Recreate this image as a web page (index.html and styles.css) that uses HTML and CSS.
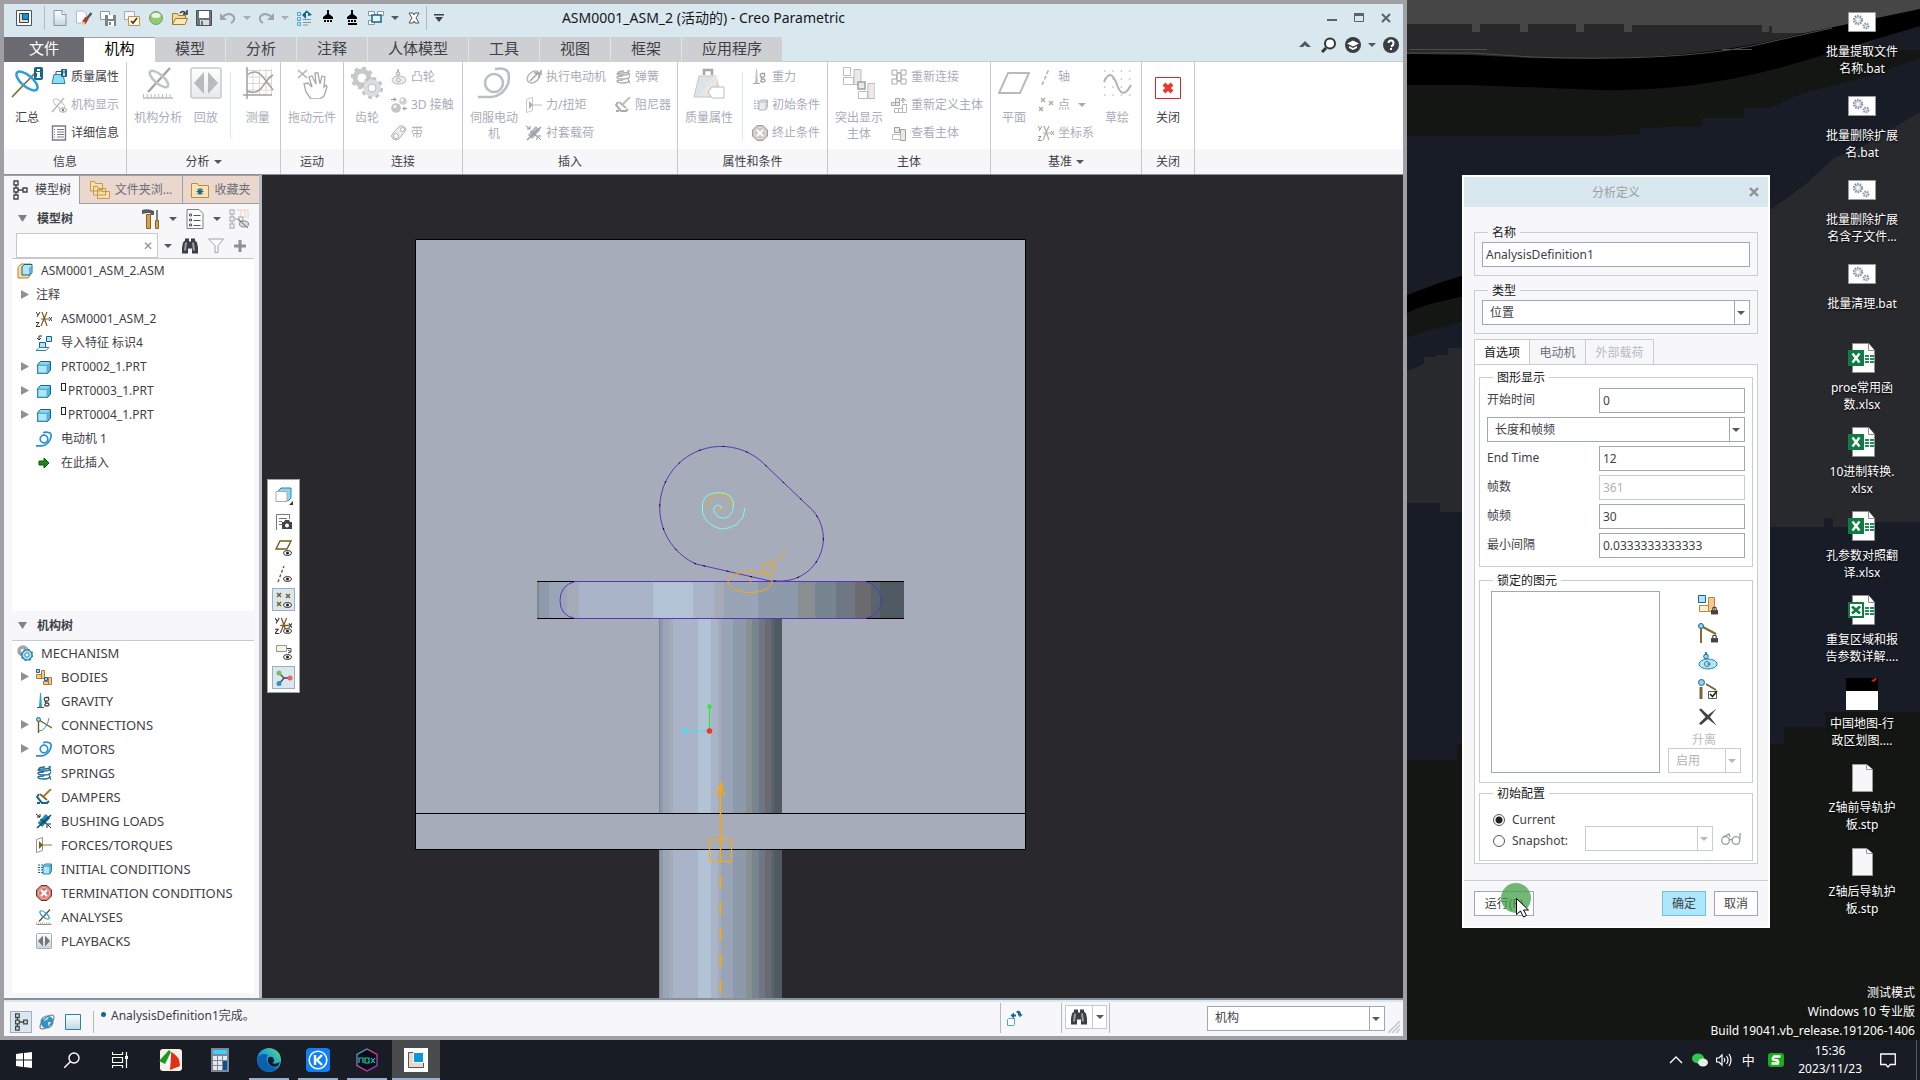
FILE: index.html
```html
<!DOCTYPE html>
<html lang="zh-CN">
<head>
<meta charset="utf-8">
<title>ASM0001_ASM_2 (活动的) - Creo Parametric</title>
<link rel="stylesheet" href="styles.css">
</head>
<body>
<svg class="defs" aria-hidden="true">
<defs>
<linearGradient id="gm" x2="0" y2="1"><stop stop-color="#fff"/><stop offset="1" stop-color="#c3d8e2"/></linearGradient>
<linearGradient id="ge" x1="0" y1="1" x2="1" y2="0"><stop stop-color="#0c59a4"/><stop offset=".5" stop-color="#1b9de2"/><stop offset="1" stop-color="#5fe06c"/></linearGradient>
<linearGradient id="gn" x2="1" y2="1"><stop stop-color="#18c6e8"/><stop offset=".5" stop-color="#ee3a8c"/><stop offset="1" stop-color="#7a3cf0"/></linearGradient>
</defs>
<symbol id="creo" viewBox="0 0 16 16"><path fill="#fff" stroke="#4b5560" d="M.5.500h15v15H.5z"/><path fill="#ead8cf" stroke="#444" d="M3.500 3.500h9v9h-9z"/><path fill="#0a96e0" stroke="#245" d="M6.500 3.500h6v6h-6z"/></symbol>
<symbol id="new" viewBox="0 0 16 16"><path fill="url(#gm)" stroke="#8f959c" d="M2 .5h8l4 4v11H2z"/><path fill="#fff" stroke="#8f959c" d="M10 .5v4h4"/></symbol>
<symbol id="eraser" viewBox="0 0 16 16"><path fill="#fff" stroke="#b5bac0" d="M.5 1h7l3 3v9h-10z"/><path stroke="#4c555e" stroke-width="2.500" d="m15.500 3-5 6"/><path stroke="#b33a2c" stroke-width="4" d="m11 8-3.500 5"/><path stroke="#e9c9a0" stroke-width="3" d="m8 12-1.500 2.500"/></symbol>
<symbol id="savecopy" viewBox="0 0 16 16"><path fill="#fff" stroke="#8f959c" d="M.5 1.500h9v8h-9z"/><path fill="#7d838c" d="M5 5h11v11H5z"/><path fill="#fff" d="M8 5h5v4H8zM8 11h6v5H8z"/><path fill="#7d838c" d="M9 12h2v3H9z"/></symbol>
<symbol id="check" viewBox="0 0 16 16"><path fill="#f7f7fa" stroke="#a5abb3" d="M.5 1.500h10v8H.5z"/><path fill="#fff7e8" stroke="#c9923f" d="M4.500 6.500h11v9h-11z"/><path fill="none" stroke="#333" stroke-width="1.600" d="m7 11 2 2 4-5"/></symbol>
<symbol id="ball" viewBox="0 0 16 16"><circle cx="8" cy="8" r="6.500" fill="#8fcc6c" stroke="#7f9a77"/><ellipse cx="8" cy="5.500" rx="4.500" ry="2.500" fill="#e9f8dd"/></symbol>
<symbol id="open" viewBox="0 0 16 16"><path fill="#f5d79a" stroke="#a97a2c" d="M.5 14.500v-11h5l1 2h7v3"/><path fill="#fbe9bd" stroke="#a97a2c" d="m.5 14.500 3-6h12l-2.500 6z"/><path fill="none" stroke="#333" stroke-width="1.500" d="M8 3q3-3 5.500 0M15 0v4h-4"/></symbol>
<symbol id="save" viewBox="0 0 16 16"><path fill="#6e747d" stroke="#4d5259" d="M.5.500h15v15H.5z"/><path fill="#fff" d="M3 1h10v7H3z"/><path fill="#d9dde2" d="M4 10h9v5H4z"/><path fill="#6e747d" d="M5 11h2v4H5z"/></symbol>
<symbol id="undo" viewBox="0 0 16 16"><path fill="none" stroke="#a0a3ab" stroke-width="2" d="M2 7q8-6 12 0 1 4-3 6"/><path fill="#a0a3ab" d="M0 3v7h7z"/></symbol>
<symbol id="redo" viewBox="0 0 16 16"><path fill="none" stroke="#a0a3ab" stroke-width="2" d="M14 7Q6 1 2 7q-1 4 3 6"/><path fill="#a0a3ab" d="M16 3v7H9z"/></symbol>
<symbol id="regen" viewBox="0 0 16 16"><path fill="none" stroke="#4aa8d8" d="M1.500 2.500h3v3h-3zM1.500 7.500h3v3h-3zM1.500 12.500h3v3h-3z"/><path stroke="#8f959c" d="M7 9.500h8M7 12.500h8M7 15h5"/><path fill="#16668a" d="M6 5l4-4v8zM15 4 10 0l0 3 2 0 0 3 4-1z"/></symbol>
<symbol id="brush" viewBox="0 0 16 16"><path fill="#000" d="M7 0h2v4l4 3v2H3V7l4-3z"/><path stroke="#000" stroke-width="2" stroke-dasharray="2 1" d="M4 11h9"/></symbol>
<symbol id="brush2" viewBox="0 0 16 16"><use href="#brush"/><path stroke="#000" stroke-width="2" d="M4 14h9"/></symbol>
<symbol id="wins" viewBox="0 0 16 16"><path fill="#fff" stroke="#8f959c" d="M.5 1.500h6v4h-6zM9.500 1.500h6v4h-6zM.5 10.500h6v4h-6z"/><path fill="#e6f6fd" stroke="#16668a" stroke-width="1.500" d="M4 5h9v7H4z"/></symbol>
<symbol id="xx" viewBox="0 0 16 16"><path fill="#fff" stroke="#555" d="M3 3h4l1 2 1-2h4l-3 5 3 5H9l-1-2-1 2H3l3-5z"/></symbol>
<symbol id="tri" viewBox="0 0 8 8"><path fill="currentColor" d="M0 2h8L4 6z"/></symbol>
<symbol id="tribar" viewBox="0 0 10 10"><path fill="currentColor" d="M0 1h10v1.500H0zM1 4h8L5 9z"/></symbol>
<symbol id="trir" viewBox="0 0 8 10"><path fill="#8e9097" d="M0 0v9l8-4.500z"/></symbol>
<symbol id="trid" viewBox="0 0 9 8"><path fill="#808289" d="M0 0h9L4.500 7z"/></symbol>

<symbol id="mech" viewBox="0 0 32 32"><path stroke="#8a6a2f" stroke-width="1.800" d="M1 30 26 4"/><ellipse cx="16" cy="14" rx="5.500" ry="13" transform="rotate(-50 16 14)" fill="none" stroke="#2f9fd8" stroke-width="2.500"/></symbol>
<symbol id="mechinfo" viewBox="0 0 32 32"><use href="#mech"/><rect x="23" width="9" height="13" rx="2" fill="#16668a"/><path fill="#fff" d="M26 2h3v2h-3zM25 5h4v5h1v1h-5v-1h1V6h-1z"/></symbol>
<symbol id="mass" viewBox="0 0 32 32"><path fill="none" stroke="#4c555e" stroke-width="2.500" d="M11 8V3h8v5"/><path fill="#8fd6f0" stroke="#5b97b2" d="m1 30 5-21h17l5 21z"/><path fill="#f0c8b4" d="m6 29 15-20h3l1 5-11 15z"/></symbol>
<symbol id="massb" viewBox="0 0 32 32"><use href="#mass"/><path fill="#fff" stroke="#777c85" d="m15 25 4-5h12v11H19z"/></symbol>
<symbol id="massi" viewBox="0 0 16 16"><path fill="none" stroke="#4c555e" d="M5 5V2.500h5"/><path fill="#8fdcf5" stroke="#2a83a8" d="m1 14.500 2-9h9l2 9z"/><rect x="10" width="6" height="8" rx="1" fill="#16668a"/><path stroke="#fff" stroke-width="1.500" d="M13 1v1.500M13 3.500V7"/></symbol>
<symbol id="mechdisp" viewBox="0 0 16 16"><path stroke="#777" stroke-width="1.500" d="M1 15 13 1"/><ellipse cx="8" cy="7" rx="3" ry="7" transform="rotate(-50 8 7)" fill="none" stroke="#777"/><ellipse cx="12" cy="13" rx="3.500" ry="2.200" fill="#fff" stroke="#444"/><circle cx="12" cy="13" r="1.200"/></symbol>
<symbol id="doc" viewBox="0 0 16 16"><path fill="#fff" stroke="#777c85" stroke-width="1.400" d="M1.500 1h13v14h-13z"/><path stroke="#777c85" d="M3 4.500h1M6 4.500h7M3 7h1M6 7h7M3 9.500h1M6 9.500h7M3 12h1M6 12h7"/></symbol>
<symbol id="mechan" viewBox="0 0 32 32"><path stroke="#6b4a1c" stroke-width="2.500" d="M6 25 28 1"/><ellipse cx="17" cy="12" rx="4.500" ry="11.500" transform="rotate(-50 17 12)" fill="none" stroke="#2f9fd8" stroke-width="2.500"/><path stroke="#777" stroke-width="1.500" d="M1 31h30"/><path stroke="#777" stroke-width="4" stroke-dasharray="1 2.800" d="M1 29h30"/></symbol>
<symbol id="play" viewBox="0 0 32 32"><rect x="1" y="1" width="30" height="30" rx="2" fill="url(#gm)" stroke="#8f959c" stroke-width="1.500"/><path fill="#777" d="M14 5v22L4 16zM18 5v22l10-11z"/></symbol>
<symbol id="measure" viewBox="0 0 32 32"><path fill="none" stroke="#dba992" d="M5 3.500h25M5 10h25M5 16.500h25M5 23h25M11 2v26M17.500 2v26M24 2v26M29.500 2v26"/><path fill="none" stroke="#444" stroke-width="1.500" d="M5 8q9-7 16 2t10 13M5 24q10 4 16-5T31 8M5 0v32M1 28h29"/></symbol>
<symbol id="hand" viewBox="0 0 32 32"><path stroke="#50687c" stroke-width="1.500" d="m2 3 9 8M11 3 2 11"/><path fill="#fff" stroke="#555" stroke-width="1.300" d="m8 17 4-1 4 4-3-10 3-1 4 8-1-11h3l2 11 2-8 3 1-1 10 2-2 1 2-3 9-4 3h-9l-5-7z"/></symbol>
<symbol id="gear" viewBox="0 0 32 32"><circle cx="11" cy="11" r="7" fill="none" stroke="#8f9298" stroke-width="5"/><circle cx="11" cy="11" r="10" fill="none" stroke="#8f9298" stroke-width="3" stroke-dasharray="4 3.800"/><circle cx="21" cy="21" r="6.500" fill="#fff" stroke="#9fc4d6" stroke-width="5"/><circle cx="21" cy="21" r="9.800" fill="none" stroke="#78889a" stroke-width="2.500" stroke-dasharray="4 3.700"/><circle cx="21" cy="21" r="4" fill="#fff" stroke="#66788a"/></symbol>
<symbol id="gears" viewBox="0 0 16 16"><circle cx="6" cy="6" r="4" fill="none" stroke="#a2a4a8" stroke-width="3.500"/><circle cx="10" cy="10" r="5" fill="#aee6fb" stroke="#2a83a8" stroke-width="1.200"/><circle cx="10" cy="10" r="5.600" fill="none" stroke="#2a83a8" stroke-width="1.500" stroke-dasharray="2 2.400"/><circle cx="10" cy="10" r="2.200" fill="#fff" stroke="#2a83a8"/></symbol>
<symbol id="cam" viewBox="0 0 16 16"><path fill="none" stroke="#16668a" stroke-width="1.500" d="M7 0v3"/><circle cx="7" cy="4.500" r="1.800" fill="#8fdcf5" stroke="#16668a"/><ellipse cx="8" cy="11" rx="7" ry="4" fill="#aee6fb" stroke="#2a83a8"/><circle cx="7.500" cy="11" r="1.800" fill="#fff" stroke="#16668a"/></symbol>
<symbol id="d3" viewBox="0 0 16 16"><circle cx="12" cy="4" r="3.800" fill="#8ea9b8"/><circle cx="5" cy="11" r="4.800" fill="#77919f"/><circle cx="4" cy="9.500" r="1.500" fill="#fff"/><circle cx="11" cy="3" r="1.200" fill="#fff"/><path stroke="#222" fill="none" d="M0 2.500h5M3 .5l2 2-2 2M16 11.500h-4M14 9.500l-2 2 2 2"/></symbol>
<symbol id="belt" viewBox="0 0 16 16"><path fill="#ddd" stroke="#666" d="m2 8 7-7q5-1 6 4L8 14q-3 2-6 0-3-3 0-6z"/><circle cx="5" cy="11" r="2.500" fill="#fff" stroke="#666"/><circle cx="11.500" cy="4.500" r="2" fill="#fff" stroke="#666"/></symbol>
<symbol id="motor" viewBox="0 0 32 32"><path fill="none" stroke="#2b93cf" stroke-width="2.600" d="M0 30h13q12-1 17-13 3-13-4-15-3-1-9 0"/><circle cx="16" cy="16" r="9" fill="none" stroke="#2b93cf" stroke-width="2.600"/></symbol>
<symbol id="motors" viewBox="0 0 16 16"><path fill="none" stroke="#2b8fd2" stroke-width="1.700" d="M0 14.800h6q5-.5 8-6 3-7-2-7.500-3-.5-5 .5"/><circle cx="8" cy="8" r="3.800" fill="none" stroke="#2b8fd2" stroke-width="1.700"/></symbol>
<symbol id="fmotor" viewBox="0 0 16 16"><ellipse cx="7.500" cy="8" rx="5" ry="7" transform="rotate(50 7.500 8)" fill="none" stroke="#777" stroke-width="1.500"/><path fill="none" stroke="#444" stroke-width="1.500" d="M4 12 12 4M8 4h5v5M15 1v5"/></symbol>
<symbol id="force" viewBox="0 0 16 16"><path fill="#fff" stroke="#8f959c" d="m.5 2.500 6-2v13l-6 2z"/><path stroke="#a07a36" d="M3 8h13"/><path fill="#7d5a1c" d="M3 4v8l4-4z"/></symbol>
<symbol id="bush" viewBox="0 0 16 16"><path stroke="#1f86b8" stroke-width="6" d="m4 12 8-9"/><path stroke="#16485f" stroke-width="1.500" d="m4.500 6 6 5M1 15 15 2"/><path fill="none" stroke="#222" d="m0 1 4 3M1 4h3V1M15 15l-3-3M11 15v-4h4"/></symbol>
<symbol id="spring" viewBox="0 0 16 16"><path fill="none" stroke="#1c6c95" stroke-width="1.500" d="M14 1q1 3-6 3-6 0-6 1t6 1 6-2M2 8q0 2 6 2t6-2M2 8q0-1 6-1M2 12q0 2 6 2t6-3M2 12q0-1 6-1M3 4q0-2 6-2"/><path stroke="#1c6c95" fill="none" d="m13 1 2 6-2 3 2 5"/></symbol>
<symbol id="damp" viewBox="0 0 16 16"><path stroke="#a87b30" stroke-width="2" d="M15 0 7 8"/><path stroke="#8a6a2f" stroke-width="2" d="m4 5 7 6"/><path fill="none" stroke="#16668a" stroke-width="2" d="M3 5 1 8l5 6 5 0 2-2M1 14h3"/></symbol>
<symbol id="grav" viewBox="0 0 16 16"><path fill="#2aa2c4" d="M4 0h1l1 14H3z"/><path stroke="#555" d="M1 14.500h7"/><path fill="none" stroke="#444" stroke-width="1.300" d="M13 4.500h-2.500a1.800 1.800 0 1 0 0 3.500 1.800 1.800 0 1 0 0-3.500M10 8q-2 2 1 2 2 0 2 1.500T10.500 13 9 11.500 10 10"/></symbol>
<symbol id="init" viewBox="0 0 16 16"><path stroke="#16668a" stroke-dasharray="2 1" d="M2 4h5M2 6.500h5M2 9h5M2 11.500h5"/><path fill="#aee6fb" stroke="#2a83a8" d="M7 5l2-2h6.500v7l-2 3H7zM7 5h7v8M14 5l1.500-2"/></symbol>
<symbol id="term" viewBox="0 0 16 16"><path fill="#d9786f" stroke="#6b3a34" d="M5 .5h6L15.500 5v6L11 15.500H5L.5 11V5z"/><circle cx="8" cy="8" r="5.500" fill="none" stroke="#eebcb4"/><path stroke="#fff" stroke-width="2.200" d="m5 5 6 6M11 5l-6 6"/></symbol>
<symbol id="bodyb" viewBox="0 0 32 32"><path fill="#fff" stroke="#777c85" d="M.5.500h7v8h-7zM.5 10.500h10v7H.5z"/><path fill="#eed0c0" stroke="#777c85" d="M11 2.500h7v15h-7zM25 16.500h7v15h-7z"/><path fill="#eed0c0" stroke="#444" stroke-width="1.500" d="M15 15h7v7h-7z"/><path fill="#fff" stroke="#777c85" d="M15.500 24.500h9v7h-9z"/></symbol>
<symbol id="reconn" viewBox="0 0 16 16"><path fill="none" stroke="#555" stroke-width="1.500" d="M5 4h6q-2 4 0 8H5q2-4 0-8"/><path fill="#fff" stroke="#555" d="M1 1h5v5H1zM10 1h5v5h-5zM1 10h5v5H1zM10 10h5v5h-5z"/></symbol>
<symbol id="redef" viewBox="0 0 16 16"><path fill="#eed0c0" stroke="#555" d="M4.500 1.500h4v4h-4zM.5 5.500h4v3h-4zM4.500 5.500h4v3h-4z"/><path fill="#fff" stroke="#777" d="M3.500 11.500h4v4h-4zM7.500 11.500h4v4h-4zM11.500 7.500h4v8h-4z"/><path fill="none" stroke="#333" d="M12 6V2M10 4l2-3 3 3"/></symbol>
<symbol id="viewb" viewBox="0 0 16 16"><path fill="#eed0c0" stroke="#444" d="M3.500 2.500h5v5h-5zM9.500 4.500h5v11h-5z"/><path fill="#fff" stroke="#777" d="M1.500 9.500h8v5h-8z"/></symbol>
<symbol id="plane" viewBox="0 0 32 32"><path fill="none" stroke="#777" stroke-width="2" d="M10 6h21l-9 20H1z"/></symbol>
<symbol id="axis" viewBox="0 0 16 16"><path stroke="#666" stroke-width="1.500" stroke-dasharray="4 2" d="M4 16 11 0"/></symbol>
<symbol id="pts" viewBox="0 0 16 16"><path fill="none" stroke="#7d5a1c" stroke-width="1.500" d="m3 1 4 4M7 1 3 5M11 4l4 4M15 4l-4 4M1 10l4 4M5 10l-4 4"/></symbol>
<symbol id="csys" viewBox="0 0 16 16"><path fill="none" stroke="#7d5a1c" stroke-width="1.200" d="M5 8h8M6 1l5 14M11 1 5 15"/><path fill="none" stroke="#333" d="m0 1 2 3M4 1 1 6M0 11.500h3l-3 4h4M13 6l3 4M16 6l-3 4"/></symbol>
<symbol id="sketch" viewBox="0 0 32 32"><path fill="none" stroke="#888" stroke-width="1.500" stroke-dasharray="1.500 6.800" d="M3 4h28M3 12h28M3 20h28M3 28h28"/><path fill="none" stroke="#666" stroke-width="2" d="M3 15q6-14 12 0 6 20 15 3"/></symbol>
<symbol id="closex" viewBox="0 0 32 32"><path fill="#fff" stroke="#d9262c" d="M3.500 10.500h25v21h-25z"/><path stroke="#e8382f" stroke-width="4" d="m12 17 8 8M20 17l-8 8"/></symbol>

<symbol id="treei" viewBox="0 0 16 20"><path fill="none" stroke="#444" stroke-width="1.400" d="M2 1h4v4H2zM2 8h4v4H2zM2 15h4v4H2zM11 8h4v4h-4zM4 5v3M4 12v3M6 10h5"/></symbol>
<symbol id="folders" viewBox="0 0 20 20"><path fill="#f6deac" stroke="#c79a4d" d="M.5 11V1.500h4l1 2h7V11zM3.500 15V6.500h4l1 2h7V15zM7.500 18.500v-9h4l1 2h7v7z"/></symbol>
<symbol id="fav" viewBox="0 0 18 16"><path fill="#f9e3b3" stroke="#b98d42" d="M.5 15.500V1.500h6l1 2h10v12z"/><path stroke="#16668a" stroke-width="1.200" d="M9 6v7M5.500 9.500h7M6.500 7l5 5M11.500 7l-5 5"/></symbol>
<symbol id="tools" viewBox="0 0 18 20"><path fill="#555c66" d="M0 1q6-2 12 1v4H9L8 4H5L0 5z"/><path fill="#d6a24c" stroke="#8a6420" d="M4.500 5.500h4v14h-4zM13.500 11.500h3v8h-3z"/><path stroke="#555c66" stroke-width="1.500" d="M15 1v10"/></symbol>
<symbol id="list" viewBox="0 0 17 20"><path fill="#fff" stroke="#777c85" d="M.5.500h12l4 4v15H.5z"/><path stroke="#555" d="M7 6.500h7M7 11.500h7M7 16.500h7"/><path fill="none" stroke="#555" d="M3 5h2v2H3zM3 10h2v2H3zM3 15h2v2H3z"/></symbol>
<symbol id="hid" viewBox="0 0 20 20"><path fill="none" stroke="#b6babf" stroke-width="1.300" d="M1 1h4v4H1zM1 8h4v4H1zM1 15h4v4H1zM10 8h4v4h-4zM3 5v3M3 12v3M5 10h5"/><path fill="none" stroke="#eed0c0" d="M8 1h11v9M12 1v6M16 1v8"/><ellipse cx="15" cy="15" rx="4.500" ry="3" fill="#ddd" stroke="#888"/><path stroke="#666" d="m9 10 10 9"/></symbol>
<symbol id="bino" viewBox="0 0 16 15"><path fill="#3b3f45" d="M3 0h4v3H3zM9 0h4v3H9zM1 4l2-2h4v1h2V2h4l2 2 1 5v6h-6v-5H6v5H0V9z"/><path fill="#9a9fa6" d="M3 4h2l-1 8H2zM10 4h2l1 8h-2z"/></symbol>
<symbol id="funnel" viewBox="0 0 16 15"><path fill="#fff" stroke="#9ca0a8" d="M.5.500h15L10 7v7H7V7z"/></symbol>
<symbol id="plus" viewBox="0 0 12 12"><path fill="#8e9097" d="M4.500 0h3v4.500H12v3H7.500V12h-3V7.500H0v-3h4.500z"/></symbol>
<symbol id="asm" viewBox="0 0 16 16"><path fill="#fbdc9b" stroke="#b3852f" d="M1 4.500 4 1h10v10l-3 4H1z"/><path fill="#aee6fb" stroke="#16668a" d="M5 4l2-2.500h8v8L13 12H5z"/><path fill="none" stroke="#2a83a8" d="M13 4v8"/></symbol>
<symbol id="part" viewBox="0 0 16 16"><path fill="#4fb6e0" stroke="#16668a" d="M1.500 6 4.500 2.500h10v8.500l-3 3.500h-10z"/><path fill="#aee6fb" stroke="#5aaed0" d="M2 6.500h9v7.500H2z"/><path fill="#8fd6f0" d="m2.500 5.500 2.500-2.500h9L11.500 5.500z"/></symbol>
<symbol id="import" viewBox="0 0 16 16"><path fill="#aee6fb" stroke="#16668a" d="M10.500 1.500h5v5h-5zM3.500 7.500h6v5h-6z"/><path fill="none" stroke="#333" d="M6 1H3v4M1 3l2 2 2-2"/><path fill="none" stroke="#2a83a8" d="m0 15.500 3-3h10l-3 3z"/></symbol>
<symbol id="go" viewBox="0 0 16 16"><path fill="#1a8a14" stroke="#0d5a0a" d="M3 6h5V3l5 5-5 5v-3H3z"/></symbol>
<symbol id="bodies" viewBox="0 0 16 16"><path fill="#f8c98b" stroke="#a9783a" d="M5.500 1.500h3v8h-3zM12.500 8.500h3v7h-3zM.5 5.500h5v4h-5zM7.500 12.500h5v3h-5z"/><path fill="#8fd6f0" stroke="#16668a" d="M.5.500h3v3h-3zM8.500 8.500h3v3h-3z"/></symbol>
<symbol id="conn" viewBox="0 0 16 16"><path stroke="#7d5a1c" stroke-width="1.400" d="M2.500 3v13M3 3l13 8"/><path fill="none" stroke="#2a9ad0" d="M3 14Q11 13 13 1"/><circle cx="2.500" cy="2.500" r="2" fill="#8fd6f0" stroke="#16668a"/></symbol>
<symbol id="eye" viewBox="0 0 9 6"><ellipse cx="4.500" cy="3" rx="4" ry="2.500" fill="#fff" stroke="#333"/><circle cx="4.500" cy="3" r="1.500" fill="#222"/></symbol>
<symbol id="v1" viewBox="0 0 18 18"><path fill="#8fd6f0" stroke="#2a83a8" d="m3 4 3-3h10v10l-3 3z"/><path fill="#fff" stroke="#a5abb3" d="M1 4.500h11v10H1z"/><path fill="#333" d="M18 14v4h-4z"/></symbol>
<symbol id="v2" viewBox="0 0 18 18"><path fill="none" stroke="#777" d="M1.500 17V1.500h13V6M4 5.500h8M4 8.500h3M4 11.500h3"/><path fill="#444" d="M7 9h2l1-2h4l1 2h2v7H7z"/><circle cx="12" cy="12.500" r="2" fill="#fff"/></symbol>
<symbol id="v3" viewBox="0 0 18 18"><path fill="#fff" stroke="#7d5a1c" stroke-width="1.400" d="M5 2h11l-4 8H1z"/><use href="#eye" x="8" y="11" width="9" height="6"/></symbol>
<symbol id="v4" viewBox="0 0 18 18"><path stroke="#7d5a1c" stroke-width="1.400" stroke-dasharray="3 2" d="M3 17 9 1"/><use href="#eye" x="8" y="11" width="9" height="6"/></symbol>
<symbol id="v5" viewBox="0 0 18 18"><path stroke="#7d5a1c" stroke-width="1.400" d="m2 2 4 4M6 2 2 6M11 3l4 4M15 3l-4 4M2 11l4 4M6 11l-4 4"/><use href="#eye" x="8" y="11" width="9" height="6"/></symbol>
<symbol id="v6" viewBox="0 0 18 18"><use href="#csys" width="17" height="17"/><use href="#eye" x="8" y="11" width="9" height="6"/></symbol>
<symbol id="v7" viewBox="0 0 18 18"><path fill="#fbf4dc" stroke="#8f959c" d="M1.500 2.500h10v6h-10z"/><path fill="none" stroke="#444" d="M12 5.500h4V9l-3 1M16 9l-3-2"/><use href="#eye" x="8" y="11" width="9" height="6"/></symbol>
<symbol id="v8" viewBox="0 0 18 18"><path stroke="#444" fill="none" stroke-width="1.300" d="m4 4 5 5-5 6M9 9h7"/><circle cx="4" cy="4" r="2.500" fill="#7aba68"/><circle cx="4" cy="14.500" r="2.500" fill="#3590c4"/><circle cx="15" cy="9" r="2.500" fill="#e06a60"/></symbol>
<symbol id="globe" viewBox="0 0 16 16"><circle cx="8" cy="8" r="6.500" fill="#2a95cf"/><path fill="#bfe6f7" d="M4 4q3-3 6-1L8 6 4 7zM9 8l4 0-2 5-2-1z"/><ellipse cx="8" cy="8" rx="9" ry="4" transform="rotate(-45 8 8)" fill="none" stroke="#777" stroke-width="1.100"/></symbol>
<symbol id="pane" viewBox="0 0 16 16"><path fill="url(#gm)" stroke="#2a83a8" d="M.5.500h15v15H.5z"/></symbol>
<symbol id="regen2" viewBox="0 0 16 16"><path fill="#fff" stroke="#4aa8d8" d="m.5 9.500 1-1h6v6l-1 1h-6z"/><path fill="#16668a" d="m3.500 5.500 3.500-3v2h2v2H7v2zM16 4.500 12.500 7.500v-2l-1.500 0V3.500L9 2l2-1.500q3 .5 3 4z"/></symbol>

<symbol id="lock" viewBox="0 0 8 9"><path fill="none" stroke="#444" stroke-width="1.300" d="M2 4V2q0-1 2-1t2 1v2"/><path fill="#444" d="M0 4h8v5H0z"/></symbol>
<symbol id="lbody" viewBox="0 0 20 20"><path fill="#f8c98b" stroke="#b98545" d="M10.500 2.500h6v14h-6z"/><path fill="#fdf3cf" stroke="#b98545" d="M1.500 10.500h9v6h-9z"/><path fill="#aee6fb" stroke="#16668a" d="M.5.500h7v7h-7z"/><use href="#lock" x="13" y="11" width="7" height="9"/></symbol>
<symbol id="lconn" viewBox="0 0 20 20"><path stroke="#8a6a2f" stroke-width="2" d="M3 3v17M3 3l15 8"/><circle cx="3" cy="3" r="2.500" fill="#8fd0f5" stroke="#16668a"/><use href="#lock" x="13" y="11" width="7" height="9"/></symbol>
<symbol id="lcam" viewBox="0 0 20 20"><path stroke="#16668a" stroke-width="1.500" d="M8 1v4"/><circle cx="8" cy="5.500" r="2.300" fill="#8fdcf5" stroke="#16668a"/><ellipse cx="10" cy="13" rx="9" ry="5" fill="#aee6fb" stroke="#2a83a8"/><circle cx="9" cy="13" r="2.400" fill="#fff" stroke="#16668a"/><path stroke="#16668a" d="M8.500 13h4"/></symbol>
<symbol id="econn" viewBox="0 0 20 20"><path stroke="#7d6430" stroke-width="3" d="M3 8v12"/><path stroke="#7d6430" stroke-width="2" d="m8 5 10 6"/><circle cx="3.500" cy="3.500" r="3" fill="#8fd0f5" stroke="#16668a"/><path fill="#fff" stroke="#555" d="M10.500 12.500h8v7h-8z"/><path fill="none" stroke="#222" stroke-width="1.600" d="m12 15 2.500 2.500L19 12"/></symbol>
<symbol id="del" viewBox="0 0 20 20"><path fill="#444" d="M1 2.500 3 1.500l7 6.500 8.500-6.500L12 10l7 9-9-7-7 6-2-1.500L7.500 10z"/></symbol>
<symbol id="specs" viewBox="0 0 20 12"><g fill="none" stroke="#999ca3" stroke-width="1.300"><circle cx="4.500" cy="7.500" r="3.800"/><circle cx="15" cy="7.500" r="3.800"/><path d="M8 6.500h3.500M2 4l6-3 1 3M19 6V0"/></g></symbol>

<symbol id="bat" viewBox="0 0 28 20"><path fill="#fff" stroke="#9a9a9a" d="M.5.500h27v19H.5z"/><circle cx="10" cy="8" r="4" fill="#d5dde5" stroke="#8a98a6" stroke-width="2.500" stroke-dasharray="1.500 1"/><circle cx="18" cy="14" r="2.500" fill="#d5dde5" stroke="#8a98a6" stroke-width="2" stroke-dasharray="1.500 1"/><circle cx="10" cy="8" r="1.500" fill="#fff"/></symbol>
<symbol id="sheet" viewBox="0 0 28 30"><path fill="#fff" stroke="#8f8f8f" d="M4.500.500h16l6 7v22h-22z"/><path fill="#fff" stroke="#8f8f8f" d="M20.500.500v7h6"/><path fill="#1e8e56" d="M17 12h4v2h-4zM22 12h4v2h-4zM17 15h4v2h-4zM22 15h4v2h-4zM17 18h4v2h-4zM22 18h4v2h-4z"/></symbol>
<symbol id="xls" viewBox="0 0 28 30"><use href="#sheet"/><path fill="#107c41" d="M0 7h16v16H0z"/><path stroke="#fff" stroke-width="2.400" d="m4.500 10.500 7 9M11.500 10.500l-7 9"/></symbol>
<symbol id="xls2" viewBox="0 0 28 30"><use href="#sheet"/><path fill="#fff" stroke="#107c41" stroke-width="2" d="M1 8h14v14H1z"/><path stroke="#107c41" stroke-width="2.800" d="m4 11.500 8 7M12 11.500l-8 7"/></symbol>
<symbol id="map" viewBox="0 0 32 32"><path fill="#fff" d="M0 0h32v32H0z"/><path d="M0 0h32v13H0z"/><path fill="none" stroke="#e8141c" stroke-width="2" d="M26 2q2 2 4-2"/></symbol>
<symbol id="file" viewBox="0 0 21 28"><path fill="#f7f7fa" stroke="#9a9a9a" d="M.5.500h14l6 5v22H.5z"/><path fill="#fff" stroke="#9a9a9a" d="M14.500.500v5h6"/></symbol>
</svg>

<div class="screen">
<main class="desktop">
<svg class="wallpaper" viewBox="1407 0 513 1040" preserveAspectRatio="xMaxYMin slice" aria-hidden="true">
<path fill="#171c26" d="M1407 0h513v1040h-513z"/>
<path fill="#141613" d="M1407 50h513v8L1870 76 1800 94 1770 108H1744V118H1702V126L1640 128V134L1600 136H1407z"/>
<path fill="#28282b" d="M1407 20h500l-40 25-160 18h-300z"/>
<path fill="#464647" d="M1407 0h513v9L1830 33H1772V26H1769V32H1762V25H1632V32H1624V24H1584V32H1576V24H1528V32H1520V24H1480V32H1472V24H1407z"/>
<path d="M1407 54 1470 55 1530 58Q1690 63 1800 34L1920 9V26L1800 62Q1700 92 1600 90L1470 85H1407z"/>
<path fill="none" stroke="#4c4c4e" d="M1407 53h65l60 4q140 5 220-11l80-18"/>
<path stroke="#4c4c4e" d="M1409 49.500h78M1722 49.500h30"/>
<path fill="#28292c" d="m1920 112-60 36-26 10-28 26-36 26v317h54v-9h9v9h41v-5h46z"/>
<path d="M1407 295q30-12 60-21v22q-40 7-60 17z"/>
<path fill="#141613" d="M1407 313q30-12 60-17v25q-40 9-60 17z"/>
<path fill="#28292c" d="M1407 371 1424 364V357H1437V355H1448V348H1470V512H1440V503H1407z"/>
<path fill="#141613" d="M1407 760h50V744h327v-17h41V712h95v328h-513z"/>
</svg>

<section class="creo">
<header class="titlebar">
<div class="quick">
<button class="logo" aria-label="Creo"><svg class="i16"><use href="#creo"/></svg></button><i class="bar"></i>
<button aria-label="新建"><svg class="i16"><use href="#new"/></svg></button>
<button aria-label="拭除"><svg class="i16"><use href="#eraser"/></svg></button>
<button aria-label="保存副本"><svg class="i16"><use href="#savecopy"/></svg></button>
<button aria-label="检入"><svg class="i16"><use href="#check"/></svg></button>
<button aria-label="外观"><svg class="i16"><use href="#ball"/></svg></button>
<button aria-label="打开"><svg class="i16"><use href="#open"/></svg></button>
<button aria-label="保存"><svg class="i16"><use href="#save"/></svg></button>
<button aria-label="撤消"><svg class="i16"><use href="#undo"/></svg></button>
<button class="dd off" aria-label="撤消列表"><svg class="i8"><use href="#tri"/></svg></button>
<button aria-label="重做"><svg class="i16"><use href="#redo"/></svg></button>
<button class="dd off" aria-label="重做列表"><svg class="i8"><use href="#tri"/></svg></button>
<button aria-label="重新生成"><svg class="i16"><use href="#regen"/></svg></button>
<button aria-label="清除"><svg class="i16"><use href="#brush"/></svg></button>
<button aria-label="清除全部"><svg class="i16"><use href="#brush2"/></svg></button>
<button aria-label="窗口"><svg class="i16"><use href="#wins"/></svg></button>
<button class="dd" aria-label="窗口列表"><svg class="i8"><use href="#tri"/></svg></button>
<button aria-label="关闭窗口"><svg class="i16"><use href="#xx"/></svg></button><i class="bar"></i>
<button class="more" aria-label="自定义"><svg class="i10"><use href="#tribar"/></svg></button>
</div>
<h1>ASM0001_ASM_2 (活动的) - Creo Parametric</h1>
<div class="winctl">
<button aria-label="最小化"><svg class="i12" viewBox="0 0 12 12"><path stroke="#5d626b" stroke-width="2" d="M1 8h10"/></svg></button>
<button aria-label="最大化"><svg class="i12" viewBox="0 0 12 12"><path fill="none" stroke="#5d626b" d="M1.500 1.500h9v8h-9z"/><path stroke="#5d626b" stroke-width="3" d="M1 2.500h10"/></svg></button>
<button aria-label="关闭"><svg class="i12" viewBox="0 0 12 12"><path stroke="#5d626b" stroke-width="2" d="m2 2 8 8M10 2l-8 8"/></svg></button>
</div>
</header>
<nav class="tabs">
<button class="file">文件</button><button class="on">机构</button><button>模型</button><button>分析</button><button>注释</button><button class="w4">人体模型</button><button>工具</button><button>视图</button><button>框架</button><button class="w4">应用程序</button>
<div class="help">
<button aria-label="折叠"><svg class="i12" viewBox="0 0 12 12"><path fill="#4b5560" d="m6 2 6 6H8L6 6 4 8H0z"/></svg></button>
<button aria-label="搜索"><svg class="i16" viewBox="0 0 16 16"><circle cx="9" cy="6.500" r="5" fill="#fff" stroke="#333" stroke-width="2"/><path stroke="#333" stroke-width="3" d="m5 11-4 4"/></svg></button>
<button aria-label="学习"><svg class="i16" viewBox="0 0 16 16"><circle cx="8" cy="8" r="8" fill="#3a3d42"/><path fill="#fff" d="m2 6.500 6-3 6 3-6 3zM4 9l4 2 4-2v2l-4 2-4-2z"/></svg></button>
<button class="dd" aria-label="学习列表"><svg class="i8"><use href="#tri"/></svg></button>
<button aria-label="帮助"><svg class="i16" viewBox="0 0 16 16"><circle cx="8" cy="8" r="8" fill="#3a3d42"/><path fill="none" stroke="#fff" stroke-width="2" d="M5.500 6q0-2.500 2.500-2.500T10.500 6 8 9.500M8 11v2"/></svg></button>
</div>
</nav>

<div class="ribbon">
<section class="grp g1"><div class="cmds">
<button class="big w46"><svg class="i32"><use href="#mechinfo"/></svg>汇总</button>
<div class="stack"><button><svg class="i16"><use href="#massi"/></svg>质量属性</button><button disabled><svg class="i16"><use href="#mechdisp"/></svg>机构显示</button><button><svg class="i16"><use href="#doc"/></svg>详细信息</button></div>
</div><h2>信息</h2></section>
<section class="grp g2"><div class="cmds">
<button class="big" disabled><svg class="i32"><use href="#mechan"/></svg>机构分析</button>
<button class="big w34" disabled><svg class="i32"><use href="#play"/></svg>回放</button><i class="vsep"></i>
<button class="big w46" disabled><svg class="i32"><use href="#measure"/></svg>测量</button>
</div><h2>分析<svg class="i8"><use href="#tri"/></svg></h2></section>
<section class="grp g3"><div class="cmds"><button class="big" disabled><svg class="i32"><use href="#hand"/></svg>拖动元件</button></div><h2>运动</h2></section>
<section class="grp g4"><div class="cmds">
<button class="big w46" disabled><svg class="i32"><use href="#gear"/></svg>齿轮</button>
<div class="stack"><button disabled><svg class="i16"><use href="#cam"/></svg>凸轮</button><button disabled><svg class="i16"><use href="#d3"/></svg>3D 接触</button><button disabled><svg class="i16"><use href="#belt"/></svg>带</button></div>
</div><h2>连接</h2></section>
<section class="grp g5"><div class="cmds">
<button class="big" disabled><svg class="i32"><use href="#motor"/></svg>伺服电动<br>机</button>
<div class="stack"><button disabled><svg class="i16"><use href="#fmotor"/></svg>执行电动机</button><button disabled><svg class="i16"><use href="#force"/></svg>力/扭矩</button><button disabled><svg class="i16"><use href="#bush"/></svg>衬套载荷</button></div>
<div class="stack"><button disabled><svg class="i16"><use href="#spring"/></svg>弹簧</button><button disabled><svg class="i16"><use href="#damp"/></svg>阻尼器</button></div>
</div><h2>插入</h2></section>
<section class="grp g6"><div class="cmds">
<button class="big" disabled><svg class="i32"><use href="#massb"/></svg>质量属性</button><i class="vsep"></i>
<div class="stack"><button disabled><svg class="i16"><use href="#grav"/></svg>重力</button><button disabled><svg class="i16"><use href="#init"/></svg>初始条件</button><button disabled><svg class="i16"><use href="#term"/></svg>终止条件</button></div>
</div><h2>属性和条件</h2></section>
<section class="grp g7"><div class="cmds">
<button class="big" disabled><svg class="i32"><use href="#bodyb"/></svg>突出显示<br>主体</button>
<div class="stack"><button disabled><svg class="i16"><use href="#reconn"/></svg>重新连接</button><button disabled><svg class="i16"><use href="#redef"/></svg>重新定义主体</button><button disabled><svg class="i16"><use href="#viewb"/></svg>查看主体</button></div>
</div><h2>主体</h2></section>
<section class="grp g8"><div class="cmds">
<button class="big w46" disabled><svg class="i32"><use href="#plane"/></svg>平面</button>
<div class="stack"><button disabled><svg class="i16"><use href="#axis"/></svg>轴</button><button disabled><svg class="i16"><use href="#pts"/></svg>点<svg class="i8"><use href="#tri"/></svg></button><button disabled><svg class="i16"><use href="#csys"/></svg>坐标系</button></div>
<button class="big w46" disabled><svg class="i32"><use href="#sketch"/></svg>草绘</button>
</div><h2>基准<svg class="i8"><use href="#tri"/></svg></h2></section>
<section class="grp g9"><div class="cmds"><button class="big"><svg class="i32"><use href="#closex"/></svg>关闭</button></div><h2>关闭</h2></section>
<section class="grp rest"><div class="cmds"></div><h2></h2></section>
</div>

<div class="work">
<aside class="side">
<div class="stabs"><button class="on"><svg class="tree-i"><use href="#treei"/></svg>模型树</button><button class="mid"><svg class="i20"><use href="#folders"/></svg>文件夹浏...</button><button><svg class="i18"><use href="#fav"/></svg>收藏夹</button></div>
<div class="thead"><svg class="i9"><use href="#trid"/></svg><b>模型树</b>
<span class="tt"><svg class="i20"><use href="#tools"/></svg><svg class="i8"><use href="#tri"/></svg><svg class="i20"><use href="#list"/></svg><svg class="i8"><use href="#tri"/></svg><svg class="i20"><use href="#hid"/></svg></span></div>
<div class="find"><div class="box"><input type="text" aria-label="搜索模型树"><span>✕</span></div><svg class="i8"><use href="#tri"/></svg><svg class="i16"><use href="#bino"/></svg><svg class="i16"><use href="#funnel"/></svg><svg class="i12"><use href="#plus"/></svg></div>
<ul class="tree">
<li class="root"><svg class="i16"><use href="#asm"/></svg>ASM0001_ASM_2.ASM</li>
<li class="note"><svg class="ar"><use href="#trir"/></svg>注释</li>
<li><svg class="i16"><use href="#csys"/></svg>ASM0001_ASM_2</li>
<li><svg class="i16"><use href="#import"/></svg>导入特征 标识4</li>
<li class="has"><svg class="ar"><use href="#trir"/></svg><svg class="i16"><use href="#part"/></svg>PRT0002_1.PRT</li>
<li class="has"><svg class="ar"><use href="#trir"/></svg><svg class="i16"><use href="#part"/></svg><i class="pk"></i>PRT0003_1.PRT</li>
<li class="has"><svg class="ar"><use href="#trir"/></svg><svg class="i16"><use href="#part"/></svg><i class="pk"></i>PRT0004_1.PRT</li>
<li><svg class="i16"><use href="#motors"/></svg>电动机 1</li>
<li><svg class="i16"><use href="#go"/></svg>在此插入</li>
</ul>
<div class="thead"><svg class="i9"><use href="#trid"/></svg><b>机构树</b></div>
<ul class="tree mtree">
<li class="root"><svg class="i16"><use href="#gears"/></svg>MECHANISM</li>
<li class="has"><svg class="ar"><use href="#trir"/></svg><svg class="i16"><use href="#bodies"/></svg>BODIES</li>
<li><svg class="i16"><use href="#grav"/></svg>GRAVITY</li>
<li class="has"><svg class="ar"><use href="#trir"/></svg><svg class="i16"><use href="#conn"/></svg>CONNECTIONS</li>
<li class="has"><svg class="ar"><use href="#trir"/></svg><svg class="i16"><use href="#motors"/></svg>MOTORS</li>
<li><svg class="i16"><use href="#spring"/></svg>SPRINGS</li>
<li><svg class="i16"><use href="#damp"/></svg>DAMPERS</li>
<li><svg class="i16"><use href="#bush"/></svg>BUSHING LOADS</li>
<li><svg class="i16"><use href="#force"/></svg>FORCES/TORQUES</li>
<li><svg class="i16"><use href="#init"/></svg>INITIAL CONDITIONS</li>
<li><svg class="i16"><use href="#term"/></svg>TERMINATION CONDITIONS</li>
<li><svg class="i16"><use href="#mechan"/></svg>ANALYSES</li>
<li><svg class="i16"><use href="#play"/></svg>PLAYBACKS</li>
</ul>
</aside>
<div class="view">
<svg class="scene" viewBox="262 175 1141 823" preserveAspectRatio="xMidYMid slice" role="img" aria-label="模型视图">
<defs><g id="shaft"><path fill="#7c8790" d="M659 0h1v200h-1z"/><path fill="#8d9aab" d="M660 0h3v200h-3z"/><path fill="#9aa6b8" d="M663 0h6v200h-6z"/><path fill="#a6abb8" d="M669 0h4v200h-4z"/><path fill="#a9b4c9" d="M673 0h25v200h-25z"/><path fill="#b2c3d5" d="M698 0h13v200h-13z"/><path fill="#a9b4c9" d="M711 0h7v200h-7z"/><path fill="#a6abb8" d="M718 0h3v200h-3z"/><path fill="#99a5b7" d="M721 0h12v200h-12z"/><path fill="#8d9aab" d="M733 0h13v200h-13z"/><path fill="#8a9092" d="M746 0h6v200h-6z"/><path fill="#778590" d="M752 0h7v200h-7z"/><path fill="#6f7684" d="M759 0h6v200h-6z"/><path fill="#6b6a70" d="M765 0h6v200h-6z"/><path fill="#59646e" d="M771 0h3v200h-3z"/><path fill="#505a63" d="M774 0h8v200h-8z"/></g>
<clipPath id="c1"><path d="M650 618h140v195H650z"/></clipPath><clipPath id="c2"><path d="M650 850h140v150H650z"/></clipPath></defs>
<path fill="#a6acb9" stroke="#000" d="M415.500 239.500h610v610h-610z"/>
<g clip-path="url(#c1)"><use href="#shaft" y="618"/></g><g clip-path="url(#c2)"><use href="#shaft" y="850"/></g>
<path stroke="#000" d="M415 813.500h611"/>
<g><path fill="#7c8790" d="M537 581h2v37h-2z"/><path fill="#8d9aab" d="M539 581h10v37h-10z"/><path fill="#9aa6b8" d="M549 581h18v37h-18z"/><path fill="#a6abb8" d="M567 581h12v37h-12z"/><path fill="#a9b4c9" d="M579 581h74v37h-74z"/><path fill="#b2c3d5" d="M653 581h40v37h-40z"/><path fill="#a9b4c9" d="M693 581h21v37h-21z"/><path fill="#a6abb8" d="M714 581h10v37h-10z"/><path fill="#99a5b7" d="M724 581h34v37h-34z"/><path fill="#8d9aab" d="M758 581h40v37h-40z"/><path fill="#8a9092" d="M798 581h17v37h-17z"/><path fill="#778590" d="M815 581h21v37h-21z"/><path fill="#6f7684" d="M836 581h19v37h-19z"/><path fill="#6b6a70" d="M855 581h16v37h-16z"/><path fill="#59646e" d="M871 581h9v37h-9z"/><path fill="#505a63" d="M880 581h24v37h-24z"/></g>
<path stroke="#000" d="M537 581.500h367M537 618.500h367"/>
<g fill="none" stroke="#5b35b8"><path d="M575 581.500h291M575 618.500h291M575 581.500q-15 4-15 19t15 18M865 581.500q16 4 16 19t-16 18"/><path d="M696 564A61.500 61.500 0 1 1 761 461L807 505A42.500 42.500 0 0 1 782 581L770 581Z"/></g>
<path fill="none" stroke="#000" stroke-dasharray="2 22" d="M696 564A61.500 61.500 0 1 1 761 461L807 505A42.500 42.500 0 0 1 782 581L770 581Z"/>
<g fill="none" stroke="#ffa800"><path d="M706 507Q710 494 720 494T733.500 507M717 511l4-4 4 4"/><ellipse cx="750" cy="582" rx="22" ry="10.500"/><circle cx="768.500" cy="568" r="6"/><path d="m768 569 18-18M750.500 578v5"/><path stroke-width="1.400" d="M720.500 784v78M717 796l3.500-13 3.500 13"/><path d="M709.500 839.500h22v22h-22z"/><path stroke-width="1.500" stroke-dasharray="13 13" d="M720.500 876v122"/></g>
<path fill="none" stroke="#7dffe0" d="m745 508-2 9-7 8-8 3-7 1-8-3-7-6-3.500-7V503l3-6 5-3 7-1.500 8 1 6 4 2 6-1 8-4 5-5 2-6-2-4-6 1-4 4-1.500 3 2v2"/>
<path stroke="#2fe02f" stroke-width="1.200" d="M709.500 731v-25"/><path stroke="#3fe4f5" stroke-width="1.200" d="M709 731h-25"/><circle cx="709.500" cy="706.500" r="2.200" fill="#2ef02e"/><circle cx="684.500" cy="731" r="2.200" fill="#3fe4f5"/><circle cx="709.500" cy="731" r="2.800" fill="#f5302e"/>
</svg>
<div class="vtool" role="toolbar"><button aria-label="视图"><svg class="i18"><use href="#v1"/></svg></button><button aria-label="快照"><svg class="i18"><use href="#v2"/></svg></button><button aria-label="平面显示"><svg class="i18"><use href="#v3"/></svg></button><button aria-label="轴显示"><svg class="i18"><use href="#v4"/></svg></button><button class="on" aria-label="点显示"><svg class="i18"><use href="#v5"/></svg></button><button aria-label="坐标系显示"><svg class="i18"><use href="#v6"/></svg></button><button aria-label="注释显示"><svg class="i18"><use href="#v7"/></svg></button><button class="on" aria-label="旋转中心"><svg class="i18"><use href="#v8"/></svg></button></div>
</div>
</div>

<footer class="status">
<button class="on" aria-label="导航器"><svg class="i18"><use href="#treei"/></svg></button><button aria-label="浏览器"><svg class="i16"><use href="#globe"/></svg></button><button aria-label="全屏"><svg class="i16"><use href="#pane"/></svg></button><i class="bar"></i>
<p>AnalysisDefinition1完成。</p>
<i class="bar"></i><svg class="i16 rg"><use href="#regen2"/></svg><i class="bar"></i>
<button class="bin" aria-label="查找"><svg class="i16"><use href="#bino"/></svg><span><svg class="i8"><use href="#tri"/></svg></span></button><i class="bar"></i>
<div class="sel"><select aria-label="过滤器"><option>机构</option></select></div>
<svg class="i12 grip" viewBox="0 0 12 12"><path stroke="#b9c6d0" stroke-width="1.500" d="M0 12 12 0M4 12l8-8M8 12l4-4"/></svg>
</footer>
</section>

<section class="dialog" role="dialog" aria-label="分析定义">
<header><h2>分析定义</h2><button aria-label="关闭对话框"><svg class="i12" viewBox="0 0 12 12"><path stroke="#8e9097" stroke-width="2.400" d="m2 2 8 8M10 2l-8 8"/></svg></button></header>
<form onsubmit="return false">
<fieldset><legend>名称</legend><input type="text" value="AnalysisDefinition1" aria-label="名称"></fieldset>
<fieldset><legend>类型</legend><div class="sel"><select aria-label="类型"><option>位置</option></select></div></fieldset>
<div class="dtabs"><button type="button" class="on">首选项</button><button type="button">电动机</button><button type="button" disabled>外部载荷</button></div>
<div class="panel">
<fieldset class="rows"><legend>图形显示</legend>
<label for="t0">开始时间</label><input id="t0" type="text" value="0">
<div class="sel wide"><select aria-label="时间方式"><option>长度和帧频</option></select></div>
<label for="t1">End Time</label><input id="t1" type="text" value="12">
<label for="t2">帧数</label><input id="t2" type="text" value="361" disabled>
<label for="t3">帧频</label><input id="t3" type="text" value="30">
<label for="t4">最小间隔</label><input id="t4" type="text" value="0.0333333333333">
</fieldset>
<fieldset class="lockset"><legend>锁定的图元</legend>
<div class="lockrow"><div class="listbox" role="listbox" aria-label="锁定的图元"></div>
<div class="lockcol"><button type="button" aria-label="锁定主体"><svg class="i20"><use href="#lbody"/></svg></button><button type="button" aria-label="锁定连接"><svg class="i20"><use href="#lconn"/></svg></button><button type="button" aria-label="凸轮升离"><svg class="i20"><use href="#lcam"/></svg></button><button type="button" aria-label="启用连接"><svg class="i20"><use href="#econn"/></svg></button><button type="button" aria-label="删除"><svg class="i20"><use href="#del"/></svg></button>
<label for="lift">升离</label><div class="sel"><select id="lift" disabled><option>启用</option></select></div></div></div>
</fieldset>
<fieldset class="initset"><legend>初始配置</legend>
<div class="initrow"><div class="radios"><label><input type="radio" name="cfg" checked>Current</label><label><input type="radio" name="cfg">Snapshot:</label></div>
<div class="sel"><select aria-label="快照" disabled><option></option></select></div><svg class="i20"><use href="#specs"/></svg></div>
</fieldset>
</div>
</form>
<footer><button class="run">运行(R)</button><button class="ok">确定</button><button>取消</button>
<svg class="pointer" viewBox="0 0 32 36" aria-hidden="true"><circle cx="15" cy="15" r="15" fill="#41a045" fill-opacity=".75"/><path fill="#fff" stroke="#000" d="M15.500 15.500v16l4-3.500 3 6 3-1.500-3-5.500h5z"/></svg></footer>
</section>

<ul class="icons">
<li><svg width="28" height="20"><use href="#bat"/></svg><span>批量提取文件<br>名称.bat</span></li>
<li><svg width="28" height="20"><use href="#bat"/></svg><span>批量删除扩展<br>名.bat</span></li>
<li><svg width="28" height="20"><use href="#bat"/></svg><span>批量删除扩展<br>名含子文件...</span></li>
<li><svg width="28" height="20"><use href="#bat"/></svg><span>批量清理.bat</span></li>
<li><svg width="28" height="30"><use href="#xls"/></svg><span>proe常用函<br>数.xlsx</span></li>
<li><svg width="28" height="30"><use href="#xls"/></svg><span>10进制转换.<br>xlsx</span></li>
<li><svg width="28" height="30"><use href="#xls"/></svg><span>孔参数对照翻<br>译.xlsx</span></li>
<li><svg width="28" height="30"><use href="#xls2"/></svg><span>重复区域和报<br>告参数详解....</span></li>
<li><svg width="32" height="32"><use href="#map"/></svg><span>中国地图-行<br>政区划图....</span></li>
<li><svg width="21" height="28"><use href="#file"/></svg><span>Z轴前导轨护<br>板.stp</span></li>
<li><svg width="21" height="28"><use href="#file"/></svg><span>Z轴后导轨护<br>板.stp</span></li>
</ul>
<p class="mark">测试模式<br>Windows 10 专业版<br>Build 19041.vb_release.191206-1406</p>
</main>

<nav class="taskbar">
<button class="sys" aria-label="开始"><svg class="i16" viewBox="0 0 16 16"><path fill="#fff" d="m0 2 7-1v6.500H0zM8 .900 16 0v7.500H8zM0 8.500h7V15l-7-1zM8 8.500h8V16l-8-1z"/></svg></button>
<button class="sys" aria-label="搜索"><svg class="i16" viewBox="0 0 16 16"><circle cx="10" cy="6" r="5" fill="none" stroke="#fff" stroke-width="1.400"/><path stroke="#fff" stroke-width="1.400" d="M6.500 9.500 0 16"/></svg></button>
<button class="sys tv" aria-label="任务视图"><svg class="i16" viewBox="0 0 16 16"><path fill="none" stroke="#fff" stroke-width="1.200" d="M.5 0v2.500h10V0M.5 5.500h10v5H.5zM.5 16v-2.500h10V16M14.500 0v16"/><path fill="#fff" d="M13 4h3v3h-3z"/></svg></button>
<button aria-label="录屏"><svg class="i24" viewBox="0 0 24 24"><rect x="1" y="1" width="22" height="22" rx="3" fill="#f5f1e8"/><path fill="#1a9a22" d="M10 2 0 13l6 3 6-12z"/><path fill="#e03018" d="m12 4-1 18 10-4q0-10-9-14z"/><path fill="#fff" d="m12 4-5 13 4 3z"/></svg></button>
<button aria-label="计算器"><svg class="i24" viewBox="0 0 24 24"><path fill="#7d8896" d="M3 0h18v24H3z"/><path fill="#3fd0fa" d="M5 2h14v4H5z"/><path fill="#e6e9ed" d="M5 8h4v4H5zM10 8h4v4h-4zM15 8h4v4h-4zM5 13h4v4H5zM10 13h4v4h-4zM5 18h4v4H5zM10 18h4v4h-4z"/><path fill="#0d4f9a" d="M15 13h4v9h-4z"/></svg></button>
<button class="run" aria-label="Edge"><svg class="i24" viewBox="0 0 24 24"><circle cx="12" cy="12" r="12" fill="url(#ge)"/><path fill="#0d5fb0" d="M1 9q5-5 10-2-3 4 0 9 4 5 10 3-5 6-13 4Q-1 19 1 9z"/><path fill="#171c24" d="M12 9q4-1 5 3 0 3-2 3 3 2 8-1l-2 4q-5 2-8-1-4-4-1-8z"/></svg></button>
<button class="run" aria-label="K"><svg class="i24" viewBox="0 0 24 24"><rect width="24" height="24" rx="4" fill="#1080f8"/><circle cx="12" cy="12" r="8.800" fill="none" stroke="#fff" stroke-width="1.600"/><path fill="none" stroke="#fff" stroke-width="2.400" d="M9 7v10M16 7l-5 5 5 5"/></svg></button>
<button class="run" aria-label="nox"><svg class="i24" viewBox="0 0 24 24"><path fill="#0b0d14" stroke="url(#gn)" stroke-width="1.300" d="M12 1 22 6.500v11L12 23 2 17.500v-11z"/><path fill="none" stroke="#22c7b8" stroke-width="1.200" d="M4 15v-5h4v5M10 10h4v5h-4zM16 10l4 5M20 10l-4 5"/></svg></button>
<button class="run on" aria-label="Creo"><svg class="i24" viewBox="0 0 24 24"><path fill="#fff" d="M0 0h24v24H0z"/><path fill="#ead8cf" stroke="#555" d="M4.500 4.500h15v15h-15z"/><path fill="#0a96e0" stroke="#fff" d="M9.500 4.500h10v10h-10z"/></svg></button>
<div class="tray">
<svg class="i16" viewBox="0 0 16 16"><path fill="none" stroke="#fff" stroke-width="1.400" d="m2 11 6-6 6 6"/></svg>
<svg class="i16" viewBox="0 0 16 16"><ellipse cx="6" cy="6.500" rx="6" ry="5" fill="#2dc84d"/><ellipse cx="11" cy="10.500" rx="5" ry="4" fill="#e8eee8"/></svg>
<svg class="i16" viewBox="0 0 16 16"><path fill="none" stroke="#fff" stroke-width="1.200" d="M.5 6v4h2.500l3 3V3L3 6zM8 6q1.500 2 0 4M10.500 4q3 4 0 8M13 2q4 6 0 12"/></svg>
<span class="ime">中</span>
<svg class="i16" viewBox="0 0 16 16"><rect y="1" width="16" height="14" rx="3" fill="#1cab1c"/><path fill="none" stroke="#fff" stroke-width="2.400" d="M12.500 4.500H6q-3 3.500 1 3.500t3 3.500H3.500"/></svg>
<time>15:36<br>2023/11/23</time>
<svg class="i16 note-i" viewBox="0 0 16 16"><path fill="none" stroke="#fff" stroke-width="1.300" d="M.7 2h14.600v10.500h-5L8 15l-2.300-2.500h-5z"/></svg>
<i class="peek"></i>
</div>
</nav>
</div>
</body>
</html>
```
FILE: styles.css
```css
* { box-sizing: border-box; }
body {
  margin: 0;
  font: 12px/16px "Noto Sans", "Noto Sans CJK SC", sans-serif;
  color: #3f4147;
}
h1, h2, p, ul { margin: 0; padding: 0; font-weight: 400; font-size: 12px; }
ul { list-style: none; }
button, input, select { font: inherit; color: inherit; }
button { padding: 0; border: 0; background: none; white-space: nowrap; }
svg { flex: none; display: block; }
.defs { position: absolute; width: 0; height: 0; }
.i8 { width: 8px; height: 8px; color: #55585f; }
.i9 { width: 9px; height: 8px; }
.i10 { width: 10px; height: 10px; color: #3f4147; }
.i12 { width: 12px; height: 12px; }
.i16 { width: 16px; height: 16px; }
.i18 { width: 18px; height: 18px; }
.i20 { width: 20px; height: 20px; }
.i24 { width: 24px; height: 24px; }
.i32 { width: 32px; height: 32px; }

.screen { display: flex; flex-direction: column; min-height: 100vh; background: #171c26; }
.desktop { position: relative; flex: 1; display: flex; }
.wallpaper { position: absolute; top: 0; right: 0; width: 513px; height: 100%; }

/* application window */
.creo { position: relative; flex: 1; min-width: 0; display: flex; flex-direction: column; border: 4px solid #a09fa3; background: #f7f7fa; }
.titlebar { display: grid; grid-template-columns: 1fr auto 1fr; align-items: center; height: 33px; padding-bottom: 6px; background: #d9e7ee; }
.titlebar h1 { font-size: 14px; line-height: 20px; color: #16171a; }
.quick { display: flex; align-items: center; height: 26px; }
.quick button, .winctl button, .help button { display: grid; place-items: center; width: 24px; height: 24px; }
.quick .logo { width: 40px; }
.quick .dd, .help .dd { width: 14px; }
.quick .off svg { color: #a9adb5; }
.bar { width: 1px; height: 24px; margin: 0 3px 0 0; background: #b5b8bf; }
.quick .more { width: 18px; }
.winctl { display: flex; justify-content: flex-end; padding-right: 4px; }
.winctl button { width: 27px; }

.tabs { display: flex; gap: 1px; height: 25px; background: #d9e7ee; border-bottom: 1px solid #c6cad0; }
.tabs > button { width: 70px; height: 25px; padding-bottom: 4px; font-size: 15px; line-height: 20px; color: #3f4147; background: #cdcfd3; }
.tabs > .w4 { width: 100px; }
.tabs > .file { width: 80px; margin-right: -1px; color: #fff; background: #6b6a70; }
.tabs > .on { width: 71px; margin-right: -1px; color: #000; background: #fff; border-top: 1px solid #a09fa3; }
.help { flex: 1; display: flex; justify-content: flex-end; align-items: center; height: 16px; }

.ribbon { display: flex; height: 113px; background: #fff; border-bottom: 1px solid #8e9097; }
.grp { display: flex; flex-direction: column; border-right: 1px solid #c6c8cd; }
.g1 { width: 123px; } .g2 { width: 154px; } .g3 { width: 63px; } .g4 { width: 119px; } .g5 { width: 215px; }
.g6 { width: 150px; } .g7 { width: 163px; } .g8 { width: 151px; } .g9 { width: 53px; }
.rest { flex: 1; border: 0; }
.grp h2 { display: flex; justify-content: center; align-items: center; gap: 4px; height: 25px; background: #f7f7fa; }
.cmds { display: flex; height: 87px; }
.big { display: flex; flex-direction: column; align-items: center; width: 62px; padding-top: 5px; line-height: 16px; }
.big svg { margin-bottom: 11px; }
.w46 { width: 46px; }
.w34 { width: 34px; }
.stack { display: flex; flex-direction: column; padding-top: 1px; }
.stack + .stack { margin-left: 8px; }
.stack button { display: flex; align-items: center; gap: 4px; height: 28px; padding-left: 1px; }
.stack .i8 { margin-left: 4px; }
.ribbon button:disabled { color: #a9adb8; }
.ribbon button:disabled svg { filter: grayscale(.8); opacity: .5; }
.vsep { width: 1px; height: 67px; margin: 10px 4px 0 8px; background: #d9e7ee; }
.g2 .cmds { padding-left: 1px; }
.g2 .w34 { margin-left: 1px; }
.g6 .vsep { margin: 10px 8px 0 2px; }

.work { flex: 1; display: flex; min-height: 0; }
.side { display: flex; flex-direction: column; width: 258px; border-right: 3px solid #b9bcc2; padding-bottom: 5px; }
.stabs { display: flex; height: 29px; border-top: 1px solid #a09fa3; }
.stabs button { flex: 1; display: flex; align-items: center; justify-content: center; gap: 5px; color: #6b6f78; background: #ead8cf; border: solid #a09fa3; border-width: 0 0 1px 1px; }
.stabs .on { flex: 0 0 75px; gap: 7px; color: #3f4147; background: none; border: 0; }
.stabs .mid { flex: 0 0 103px; }
.tree-i { width: 16px; height: 20px; }
.thead { display: flex; align-items: center; gap: 10px; height: 29px; padding: 0 10px 0 14px; }
.thead b { color: #3f4147; }
.tt { margin-left: auto; display: flex; align-items: center; gap: 8px; }
.find { display: flex; align-items: center; gap: 10px; height: 25px; margin: 0 5px 0 12px; }
.box { flex: 0 0 142px; min-width: 0; display: flex; align-items: center; height: 25px; margin-right: -4px; border: 1px solid #c6cad0; background: #fff; }
.box input { flex: 1; min-width: 0; width: 0; border: 0; outline: 0; background: none; }
.box span { padding-right: 4px; color: #8e9097; }
.tree { flex: 1; margin: 0 5px 0 8px; background: #fff; border-top: 1px solid #c6cad0; white-space: nowrap; overflow: hidden; }
.tree li { display: flex; align-items: center; height: 24px; padding-left: 24px; }
.mtree { font-size: 13px; }
.tree li > .i16 { margin-right: 9px; }
.tree li.root { padding-left: 5px; }
.tree li.root > .i16 { margin-right: 8px; }
.tree li.note, .tree li.has { padding-left: 9px; }
.ar { width: 8px; height: 10px; margin-right: 7px; }
.pk { align-self: flex-start; width: 5px; height: 8px; margin: 4px 2px 0 0; border: 1px solid #222; }

.view { position: relative; flex: 1; min-width: 0; overflow: hidden; background: #29292d; }
.scene { position: absolute; inset: 0; width: 100%; height: 100%; }
.vtool { position: absolute; left: 5px; top: 304px; display: flex; flex-direction: column; padding: 2px 1px; border: 1px solid #a09fa3; background: #fff; }
.vtool button { display: grid; place-items: center; width: 23px; height: 23px; margin: 2px 3px 1px; }
.vtool .on { background: #d9e7ee; outline: 1px solid #a0adbd; outline-offset: -1px; }

.status { display: flex; align-items: center; height: 38px; padding: 4px 3px 0 6px; border-top: 2px solid #8e9097; background: #f7f7fa; box-shadow: inset 0 2px #d9e7ee; }
.status > button { display: grid; place-items: center; width: 22px; height: 22px; margin: 3px 4px 0 0; }
.status > .on { background: #d9e7ee; border: 1px solid #a0adbd; }
.status > .bar { height: 30px; margin: 0 3px 4px; }
.status > .bar:nth-of-type(1) { height: 22px; margin: 3px 7px 0 5px; }
.status p { flex: 1; padding-bottom: 9px; }
.status p::before { content: ""; display: inline-block; width: 5px; height: 5px; margin-right: 5px; border-radius: 50%; background: #16668a; vertical-align: 3px; }
.status .rg { margin: 0 35px 4px 3px; }
.status > .bin { display: flex; align-items: center; width: 42px; height: 24px; margin: 0 -1px 6px 0; padding-left: 5px; border: 1px solid #c6cad0; background: #fff; }
.bin span { display: grid; place-items: center; flex: 1; height: 22px; margin-left: 5px; border-left: 1px solid #c6cad0; }
.status .sel { width: 178px; margin: 0 0 4px 94px; }
.grip { align-self: flex-end; margin: 0 0 3px 3px; }

/* shared form controls */
.sel { position: relative; }
.sel select, fieldset input[type=text] { display: block; width: 100%; height: 25px; margin: 0; border: 1px solid #a0a8b8; border-radius: 0; background: #fff; outline: 0; }
.sel select { appearance: none; padding: 0 20px 0 7px; opacity: 1; }
.sel::before { content: ""; position: absolute; right: 15px; top: 0; width: 1px; height: 25px; background: #a0a8b8; }
.sel::after { content: ""; position: absolute; right: 5px; top: 11px; border: solid transparent; border-width: 4px 4px 0; border-top-color: #55585f; }
.sel:has(:disabled) select, fieldset input[type=text]:disabled { color: #b0b3ba; border-color: #c9ccd1; }
.sel:has(:disabled)::before { background: #c9ccd1; }
.sel:has(:disabled)::after { border-top-color: #b5b8be; }

/* analysis dialog */
.dialog { position: relative; align-self: flex-start; flex: 0 0 308px; margin: 175px 34px 0 55px; border: 2px solid #fff; background: #f7f7fa; }
.dialog header { display: flex; align-items: center; height: 30px; padding-right: 8px; background: #d9e7ee; }
.dialog header h2 { flex: 1; padding: 2px 0 0 20px; text-align: center; color: #9a9ea6; }
.dialog form { display: flex; flex-direction: column; gap: 5px; padding: 16px 10px; }
fieldset { min-width: 0; margin: 0; padding: 1px 7px 8px; border: 1px solid #c9ccd1; }
legend { margin-left: 6px; padding: 2px 4px 0; line-height: 16px; color: #16171a; }
fieldset input[type=text] { padding: 0 3px; }
.dtabs { display: flex; height: 25px; }
.dtabs button { width: 56px; padding-top: 1px; border: 1px solid #c9ccd1; border-width: 1px 1px 0 0; color: #6b6f78; }
.dtabs .on { border-left-width: 1px; background: #fff; color: #16171a; }
.dtabs button:disabled { width: 68px; color: #b9bcc2; }
.panel { margin-top: -5px; padding: 3px 4px 2px; border: 1px solid #c9ccd1; background: #fff; }
.rows { display: grid; grid-template-columns: 112px 1fr; gap: 4px 0; margin-bottom: 4px; padding-top: 2px; }
.rows label { line-height: 23px; }
.rows .wide { grid-column: 1 / -1; }
.lockset { padding: 2px 11px 9px; }
.lockset legend { margin-left: 2px; }
.lockrow { display: flex; gap: 8px; height: 182px; }
.listbox { flex: 1; border: 1px solid #a0a8b8; }
.lockcol { display: flex; flex-direction: column; width: 73px; }
.lockcol button { display: flex; align-items: center; height: 28px; padding-left: 30px; }
.lockcol label { padding-left: 24px; line-height: 17px; color: #b9bcc2; }
.initset { margin-top: 1px; padding-top: 7px; padding-bottom: 9px; }
.initrow { display: flex; align-items: flex-end; }
.radios { width: 98px; }
.radios label { display: flex; align-items: center; gap: 7px; height: 21px; padding-left: 6px; }
.radios input { appearance: none; flex: none; width: 12px; height: 12px; margin: 0; border: 1px solid #55585f; border-radius: 50%; background: #fff; }
.radios input:checked { background: radial-gradient(circle, #222 3px, #fff 4px); }
.initrow .sel { width: 128px; }
.initrow > svg { margin: 0 0 2px 8px; }
.dialog footer { position: relative; display: flex; gap: 8px; padding: 10px; border-top: 1px solid #c9ccd1; }
.dialog footer button { width: 44px; height: 25px; border: 1px solid #a0a8b8; background: #fff; }
.dialog footer .run { width: 60px; margin-right: auto; }
.dialog footer .ok { background: #aee6fb; border-color: #6cc4ec; }
.pointer { position: absolute; left: 37px; top: 2px; width: 32px; height: 36px; }

/* desktop shortcuts */
.icons { position: relative; width: 116px; }
.icons li { display: flex; flex-direction: column; align-items: center; height: 84px; }
.icons svg { margin: auto; }
.icons span { flex: 0 0 41px; line-height: 17px; text-align: center; color: #fff; text-shadow: 0 1px 2px #000; }
.mark { position: absolute; right: 5px; bottom: 0; line-height: 19px; text-align: right; color: #fff; }

.taskbar { display: flex; height: 40px; background: #181c24; color: #fff; }
.taskbar button { display: grid; place-items: center; width: 48px; margin-right: 1px; }
.taskbar .sys { margin: 0; }
.taskbar .tv { margin-right: 3px; }
.taskbar .run { background: linear-gradient(#9ab0cc, #9ab0cc) 50% 100% / 40px 2px no-repeat; }
.taskbar .on { background-color: #4a4b4d; background-size: 48px 2px; }
.tray { display: flex; align-items: center; gap: 8px; margin-left: auto; padding-right: 3px; }
.ime { width: 16px; margin-right: 4px; text-align: center; font-size: 13px; }
.tray time { margin-left: 6px; line-height: 18px; text-align: center; }
.note-i { margin-left: 10px; }
.peek { width: 1px; height: 40px; margin-left: 12px; background: #55585f; }
```
